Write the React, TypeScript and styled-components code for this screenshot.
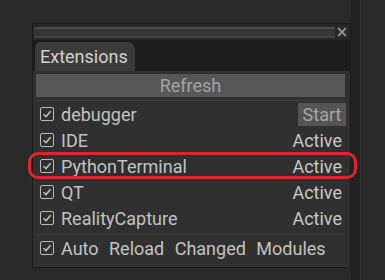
import styled, { createGlobalStyle } from 'styled-components'

const Global = createGlobalStyle`
  html, body {
    margin: 0;
    padding: 0;
    background: #292929;
    font-family: Roboto, "Liberation Sans", sans-serif;
  }
`

const items = [
  { name: 'debugger', status: 'start' },
  { name: 'IDE', status: 'Active' },
  { name: 'PythonTerminal', status: 'Active', marked: true },
  { name: 'QT', status: 'Active' },
  { name: 'RealityCapture', status: 'Active' },
]

function Check() {
  return (
    <Box>
      <svg width="10" height="10" viewBox="0 0 10 10">
        <path d="M1.5 5.2 L4 7.6 L8.6 2.2" fill="none" stroke="#c0c0c0" strokeWidth="1.5" />
      </svg>
    </Box>
  )
}

export default function App() {
  return (
    <Page>
      <Global />
      <Panel>
        <TitleBar>
          <Grip />
          <Close width="10" height="10" viewBox="0 0 10 10">
            <path d="M1 1 L9 9 M9 1 L1 9" stroke="#8e8e8e" strokeWidth="1.8" />
          </Close>
        </TitleBar>
        <TabBar>
          <Tab>Extensions</Tab>
        </TabBar>
        <Body>
          <RefreshButton>Refresh</RefreshButton>
          <Divider />
          {items.map((it) => (
            <Row key={it.name} $marked={it.marked}>
              <Check />
              <Label>{it.name}</Label>
              {it.status === 'start' ? <StartButton>Start</StartButton> : <Status>{it.status}</Status>}
            </Row>
          ))}
          <Divider />
          <Row>
            <Check />
            <Label $wide>Auto Reload Changed Modules</Label>
          </Row>
        </Body>
      </Panel>
      <SideStrip />
    </Page>
  )
}

const Page = styled.div`
  width: 385px;
  height: 280px;
  display: flex;
  overflow: hidden;
`

const Panel = styled.div`
  margin: 23px 0 0 32px;
  width: 319px;
  height: 245px;
  box-sizing: border-box;
  border: 1px solid #1b1b1b;
  background: #303030;
  display: flex;
  flex-direction: column;
`

const TitleBar = styled.div`
  height: 16px;
  background: #262626;
  display: flex;
  align-items: center;
  padding: 0 3px 0 1px;
  gap: 2px;
`

const Grip = styled.div`
  flex: 1;
  height: 7px;
  border-top: 2px solid #4a4a4a;
  border-bottom: 2px solid #444;
  background: #353535;
`

const Close = styled.svg`
  flex-shrink: 0;
`

const TabBar = styled.div`
  height: 31px;
  background: #1c1c1c;
  display: flex;
  align-items: flex-end;
  padding-left: 2px;
`

const Tab = styled.div`
  width: 100px;
  height: 29px;
  box-sizing: border-box;
  background: #3b3b3b;
  border-radius: 6px 8px 0 0;
  color: #d2d2d2;
  font-size: 18px;
  padding: 4px 0 0 5px;
`

const Body = styled.div`
  flex: 1;
  display: flex;
  flex-direction: column;
  padding: 3px 5px 0 3px;
`

const RefreshButton = styled.div`
  height: 23px;
  background: #575757;
  color: #a3a3a3;
  font-size: 18px;
  display: flex;
  align-items: center;
  justify-content: center;
`

const Divider = styled.div`
  height: 1px;
  background: #3f3f3f;
  margin: 3px 0 0;
`

const Row = styled.div<{ $marked?: boolean }>`
  position: relative;
  height: 26px;
  display: flex;
  align-items: center;
  padding-left: 4px;

  ${(p) =>
    p.$marked &&
    `
    &::after {
      content: "";
      position: absolute;
      left: -8px;
      right: -12px;
      top: -1px;
      bottom: 0;
      border: 3px solid #e0232d;
      border-radius: 10px;
    }
  `}
`

const Box = styled.div`
  width: 12px;
  height: 12px;
  border: 1.5px solid #bababa;
  border-radius: 2px;
  display: flex;
  align-items: center;
  justify-content: center;
  flex-shrink: 0;
`

const Label = styled.span<{ $wide?: boolean }>`
  flex: 1;
  margin-left: 7px;
  color: #c2c2c2;
  font-size: 18px;
  word-spacing: ${(p) => (p.$wide ? '6px' : '0')};
`

const Status = styled.span`
  color: #c8c8c8;
  font-size: 18px;
  margin-right: 3px;
`

const StartButton = styled.div`
  width: 48px;
  height: 23px;
  background: #555;
  color: #a6a6a6;
  font-size: 18px;
  display: flex;
  align-items: center;
  justify-content: center;
  margin-right: -1px;
`

const SideStrip = styled.div`
  width: 9px;
  height: 280px;
  background: #222;
  border-right: 1px solid #333;
`
